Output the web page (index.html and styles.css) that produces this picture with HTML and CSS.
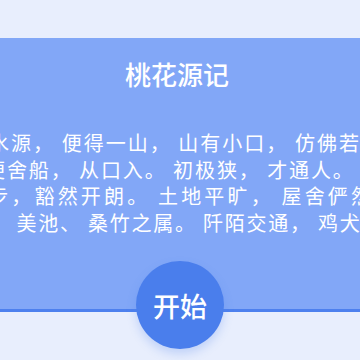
FILE: index.html
```html
<!DOCTYPE html>
<html lang="zh">
<head>
<meta charset="utf-8">
<link rel="stylesheet" href="styles.css">
</head>
<body>
<div class="page">
  <section class="card">
    <h1 class="title">桃花源记</h1>
    <p class="text"><span class="lead-2">林尽</span>水源， 便得一山， 山有小口， 仿佛若有光。<br>便舍船， 从口入。 初极狭， 才通人。 复行数<br><span class="lead-1">十</span>步，豁然开朗。 土地平旷， 屋舍俨然， 有<br><span class="lead-2">良田</span>、 美池、 桑竹之属。 阡陌交通， 鸡犬相闻。</p>
    <button class="start">开始</button>
  </section>
</div>
</body>
</html>
```

FILE: styles.css
```css
html, body {
  margin: 0;
  padding: 0;
}
body {
  width: 360px;
  height: 360px;
  overflow: hidden;
  background: #e8eefd;
  font-family: "Noto Sans CJK SC", "Noto Sans", sans-serif;
}
.page {
  padding-top: 38px;
}
.card {
  position: relative;
  height: 271px;
  background: #82a7f7;
  border-bottom: 3px solid #4d80ee;
  display: flex;
  flex-direction: column;
  align-items: flex-start;
}
.title {
  align-self: center;
  margin: 20px 6px 0 0;
  height: 32px;
  line-height: 32px;
  font-size: 26px;
  font-weight: 500;
  color: #ffffff;
}
.text {
  margin: 40px 0 0 -15px;
  width: 440px;
  flex: none;
  font-size: 20px;
  line-height: 26.5px;
  color: #ffffff;
  text-align: justify;
  text-align-last: justify;
}
.lead-1 {
  margin-left: -20px;
}
.lead-2 {
  margin-left: -40px;
}
.start {
  position: absolute;
  left: 136px;
  top: 223px;
  width: 88px;
  height: 88px;
  border: none;
  border-radius: 50%;
  background: #4a7eec;
  color: #ffffff;
  font-family: inherit;
  font-size: 27px;
  font-weight: 500;
  box-shadow: 0 5px 10px rgba(74, 126, 236, 0.25);
  padding: 0;
}
```
